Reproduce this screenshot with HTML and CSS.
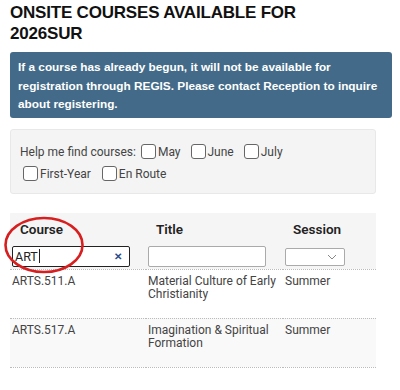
FILE: index.html
```html
<!DOCTYPE html>
<html lang="en">
<head>
  <meta charset="UTF-8" />
  <meta name="viewport" content="width=device-width, initial-scale=1.0" />
  <title>Onsite Courses</title>
  <link rel="stylesheet" href="styles.css">
</head>
<body>
  <div class="page">
    <h1>ONSITE COURSES AVAILABLE FOR 2026SUR</h1>

    <div class="notice">
      If a course has already begun, it will not be available for registration through REGIS. Please contact Reception to inquire about registering.
    </div>

    <div class="filters">
      <div class="filter-row">
        <span class="filters-label">Help me find courses:</span>
        <label><span class="box"></span>May</label>
        <label><span class="box"></span>June</label>
        <label><span class="box"></span>July</label>
      </div>
      <div class="filter-row second">
        <label><span class="box"></span>First-Year</label>
        <label><span class="box"></span>En Route</label>
      </div>
    </div>

    <div class="table-wrap">
      <table class="courses">
        <colgroup>
          <col class="col-course">
          <col class="col-title">
          <col class="col-session">
        </colgroup>
        <thead>
          <tr>
            <th>Course</th>
            <th>Title</th>
            <th>Session</th>
          </tr>
          <tr class="search-row">
            <td>
              <div class="search focused">
                <span class="search-text">ART<span class="caret"></span></span>
                <span class="clear">&#x2715;</span>
              </div>
            </td>
            <td><div class="search"></div></td>
            <td>
              <div class="select">
                <svg width="10" height="6" viewBox="0 0 10 6"><path d="M1 1 L5 5 L9 1" fill="none" stroke="#888" stroke-width="1"/></svg>
              </div>
            </td>
          </tr>
        </thead>
        <tbody>
          <tr>
            <td>ARTS.511.A</td>
            <td>Material Culture of Early Christianity</td>
            <td>Summer</td>
          </tr>
          <tr class="alt">
            <td>ARTS.517.A</td>
            <td>Imagination &amp; Spiritual Formation</td>
            <td>Summer</td>
          </tr>
        </tbody>
      </table>

      <svg class="circle" width="84" height="60" viewBox="0 0 84 60">
        <ellipse cx="41" cy="30" rx="38.5" ry="27" fill="none" stroke="#d71f20" stroke-width="2.6"/>
      </svg>
    </div>
  </div>
</body>
</html>
```

FILE: styles.css
```css
body {
  margin: 0;
  font-family: Roboto, "Liberation Sans", sans-serif;
  color: #333;
  background: #fff;
}

.page {
  width: 366px;
  padding: 0 10px;
}

h1 {
  font-family: "Liberation Sans", Arial, sans-serif;
  font-weight: bold;
  font-size: 17px;
  line-height: 21px;
  color: #111;
  margin: 2px 0 8px 0;
  max-width: 310px;
  letter-spacing: -0.2px;
}

.notice {
  background-color: #436b89;
  color: #fff;
  font-family: "Liberation Sans", Arial, sans-serif;
  font-weight: bold;
  font-size: 11.8px;
  line-height: 18.5px;
  padding: 6px 2px 4px 8px;
  border-radius: 3px;
  margin: 0 -16px 11px 0;
}

.filters {
  background: #f4f4f4;
  border: 1px solid #e8e8e8;
  border-radius: 3px;
  padding: 11px 8px 8px 9px;
  font-size: 12px;
  line-height: 22px;
  color: #444;
  margin-bottom: 19px;
}

.filter-row {
  display: flex;
  align-items: center;
  gap: 10px;
}

.filter-row.second {
  padding-left: 3px;
  gap: 11px;
}

.filters-label {
  margin-right: -5px;
}

.filters label {
  display: flex;
  align-items: center;
}

.box {
  display: inline-block;
  width: 13px;
  height: 13px;
  border: 1px solid #666;
  border-radius: 3px;
  background: #fff;
  margin-right: 2px;
}

.table-wrap {
  position: relative;
}

.courses {
  width: 366px;
  border-collapse: collapse;
  table-layout: fixed;
  font-size: 12px;
  color: #444;
}

.col-course { width: 136px; }
.col-title { width: 137px; }

.courses th {
  background: #f5f5f5;
  text-align: left;
  font-weight: 600;
  font-size: 13.5px;
  line-height: 16px;
  color: #222;
  padding: 8px 10px 3px 10px;
}

.search-row td {
  background: #f5f5f5;
  padding: 6px 2px 2px 2px;
  border-bottom: 1px dotted #bbb;
}

.search {
  height: 21px;
  width: 118px;
  border: 1px solid #aaa;
  border-radius: 2px;
  background: #fff;
  display: flex;
  align-items: center;
  justify-content: space-between;
  padding: 0 3px 0 2px;
  box-sizing: border-box;
}

.search.focused {
  border: 1.5px solid #222;
}

.search-text {
  font-size: 12.5px;
  color: #222;
  display: flex;
  align-items: center;
}

.caret {
  display: inline-block;
  width: 1px;
  height: 14px;
  background: #222;
  margin-left: 1px;
}

.clear {
  color: #2a4c8a;
  font-size: 10px;
  font-weight: bold;
  margin-right: 4px;
}

.select {
  width: 60px;
  height: 18px;
  margin-top: 2px;
  border: 1px solid #aaa;
  border-radius: 2px;
  background: #fff;
  box-sizing: border-box;
  display: flex;
  align-items: center;
  justify-content: flex-end;
  padding-right: 7px;
}

.courses tbody td {
  vertical-align: top;
  padding: 5px 2px 0 2px;
  height: 43px;
  line-height: 13.5px;
  border-bottom: 1px dotted #bbb;
}

.courses tbody tr.alt td {
  background: #f9f9f9;
}

.circle {
  position: absolute;
  left: -7px;
  top: 2px;
}
```
